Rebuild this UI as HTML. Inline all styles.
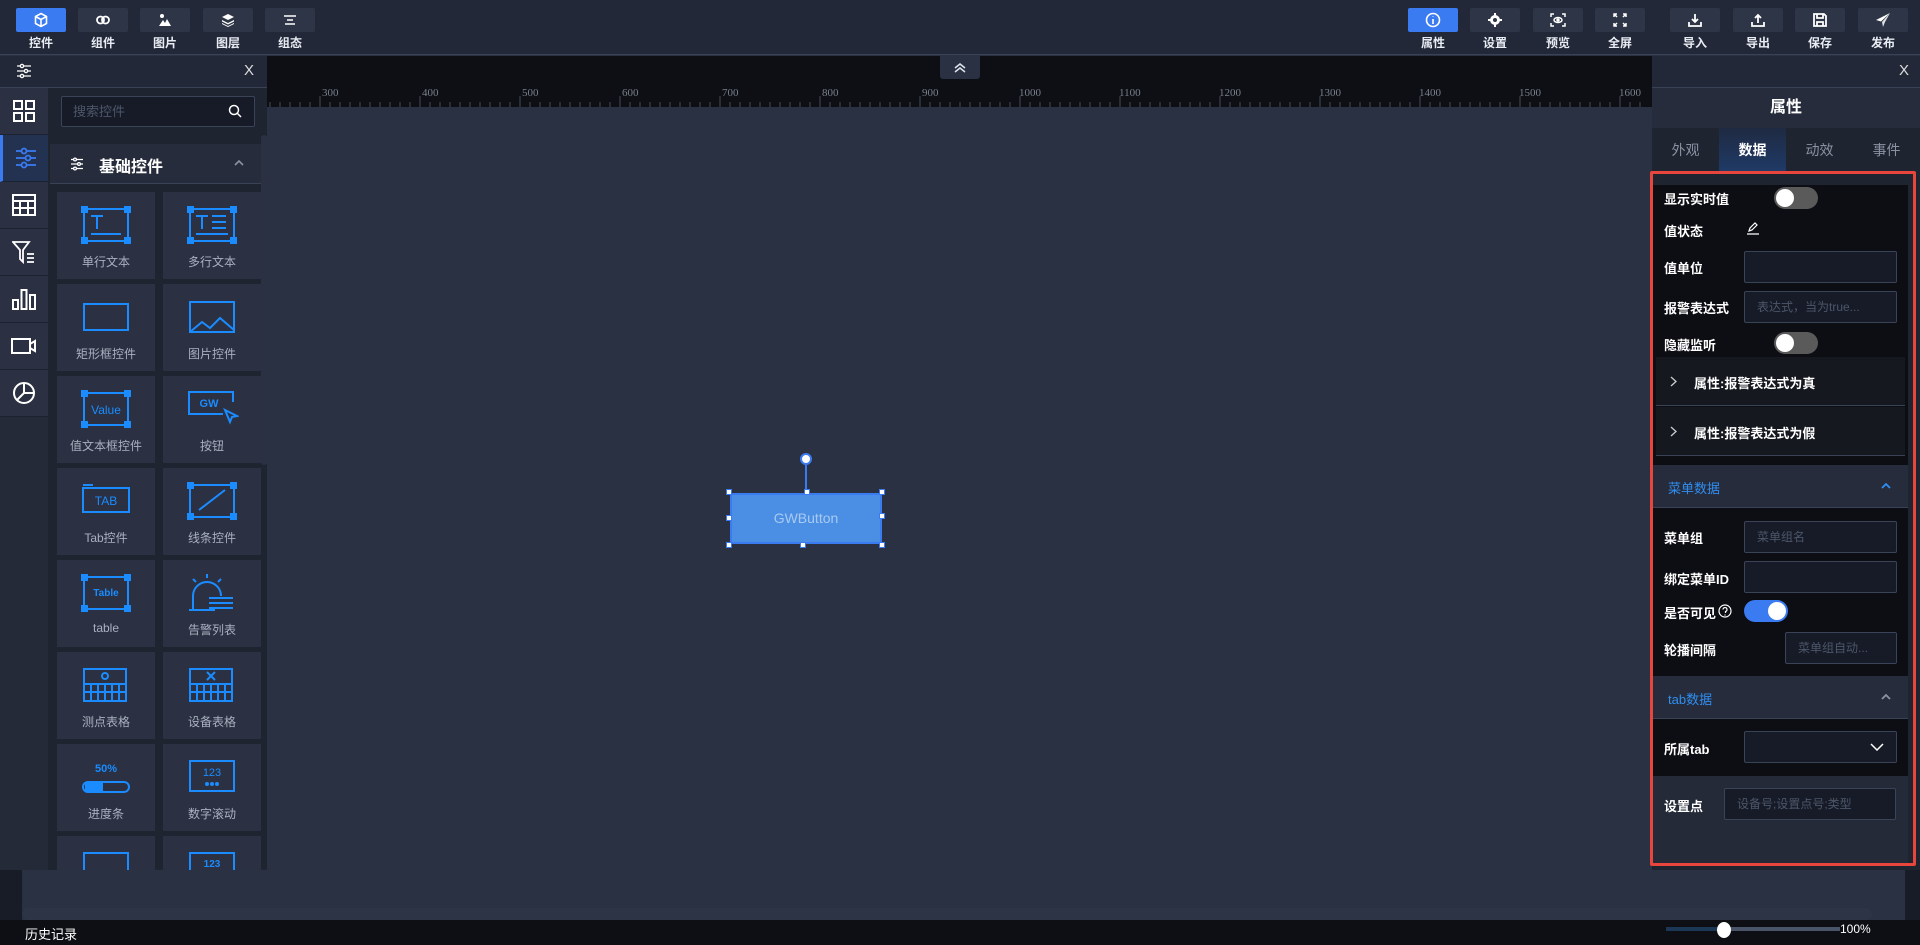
<!DOCTYPE html>
<html><head><meta charset="utf-8">
<style>
*{margin:0;padding:0;box-sizing:border-box}
body{width:1920px;height:945px;overflow:hidden;background:#2a3142;font-family:"Liberation Sans","Noto Sans CJK SC",sans-serif;color:#fff;position:relative}
.a{position:absolute}
.tb{position:absolute;top:8px;width:50px;height:24px;background:#2e3546;border-radius:2px;display:flex;align-items:center;justify-content:center}
.tbl{position:absolute;top:34px;width:50px;text-align:center;font-size:12px;font-weight:bold;color:#e8ecf3}
.card{position:absolute;width:98px;height:87px;background:#2b3142}
.card .lb{position:absolute;top:61px;width:100%;text-align:center;font-size:12px;color:#a9b1c0}
.card svg{position:absolute;left:24px;top:14px}
.lab{position:absolute;left:1664px;font-size:13px;font-weight:bold;color:#fff}
.inp{position:absolute;height:32px;border:1px solid #3a4458;background:#161b27;border-radius:2px;font-size:12px;color:#4d566a;padding-left:12px;line-height:30px}
.tg{position:absolute;width:44px;height:22px;border-radius:11px;background:#5a5a5a}
.tg i{position:absolute;left:2px;top:2px;width:18px;height:18px;border-radius:50%;background:#fff}
.side{position:absolute;left:0;width:48px;height:47px;border-bottom:1px solid #1c2130;display:flex;align-items:center;justify-content:center;background:#2b3142}
</style></head><body>
<div class="a" style="left:0;top:0;width:1920px;height:55px;background:#222838;border-bottom:1px solid #3a4256"></div>
<div class="tb" style="left:16px;background:#3a7bf2"><svg width="16" height="16" viewBox="0 0 16 16" fill="none" stroke="#fff" stroke-width="1.6"><path d="M8 1.5l5.5 3v7L8 14.5 2.5 11.5v-7z M2.5 4.5L8 7.5l5.5-3 M8 7.5v7"/></svg></div><div class="tbl" style="left:16px">控件</div>
<div class="tb" style="left:78px"><svg width="16" height="12" viewBox="0 0 16 12" fill="none" stroke="#fff" stroke-width="1.8"><circle cx="5.5" cy="6" r="3.5"/><circle cx="10.5" cy="6" r="3.5"/></svg></div><div class="tbl" style="left:78px">组件</div>
<div class="tb" style="left:140px"><svg width="14" height="14" viewBox="0 0 14 14" fill="#fff"><circle cx="4" cy="3" r="2"/><path d="M1 13l4-6 2 3 2-4 4 7z"/></svg></div><div class="tbl" style="left:140px">图片</div>
<div class="tb" style="left:203px"><svg width="14" height="14" viewBox="0 0 14 14" fill="#fff"><path d="M7 1l6 3-6 3-6-3z"/><path d="M1 7l6 3 6-3v1.5l-6 3-6-3z"/><path d="M1 10l6 3 6-3v1l-6 3-6-3z"/></svg></div><div class="tbl" style="left:203px">图层</div>
<div class="tb" style="left:265px"><svg width="12" height="10" viewBox="0 0 12 10" stroke="#fff" stroke-width="1.6"><path d="M0 1h12M3 5h6M1 9h10"/></svg></div><div class="tbl" style="left:265px">组态</div>

<div class="tb" style="left:1408px;background:#3a7bf2"><svg width="16" height="16" viewBox="0 0 16 16" fill="none" stroke="#fff" stroke-width="1.6"><circle cx="8" cy="8" r="6.5"/><path d="M8 7v5M8 4.5v.5"/></svg></div><div class="tbl" style="left:1408px">属性</div>
<div class="tb" style="left:1470px"><svg width="14" height="14" viewBox="0 0 14 14" fill="#fff"><circle cx="7" cy="7" r="5"/><circle cx="7" cy="7" r="2" fill="#2e3546"/><path d="M6 0h2v3H6zM6 11h2v3H6zM0 6h3v2H0zM11 6h3v2h-3z"/></svg></div><div class="tbl" style="left:1470px">设置</div>
<div class="tb" style="left:1533px"><svg width="16" height="14" viewBox="0 0 16 14" fill="none" stroke="#fff" stroke-width="1.5"><path d="M1 4V1h3M12 1h3v3M15 10v3h-3M4 13H1v-3"/><ellipse cx="8" cy="7" rx="4" ry="2.5"/><circle cx="8" cy="7" r="1" fill="#fff"/></svg></div><div class="tbl" style="left:1533px">预览</div>
<div class="tb" style="left:1595px"><svg width="14" height="14" viewBox="0 0 14 14" fill="none" stroke="#fff" stroke-width="1.5"><path d="M1 4V1h3M1 1l3 3M13 4V1h-3M13 1l-3 3M1 10v3h3M1 13l3-3M13 10v3h-3M13 13l-3-3"/></svg></div><div class="tbl" style="left:1595px">全屏</div>
<div class="tb" style="left:1670px"><svg width="14" height="14" viewBox="0 0 14 14" fill="none" stroke="#fff" stroke-width="1.8"><path d="M7 1v8M4 6l3 3 3-3M1 9v4h12V9"/></svg></div><div class="tbl" style="left:1670px">导入</div>
<div class="tb" style="left:1733px"><svg width="14" height="14" viewBox="0 0 14 14" fill="none" stroke="#fff" stroke-width="1.8"><path d="M7 10V2M4 5l3-3 3 3M1 9v4h12V9"/></svg></div><div class="tbl" style="left:1733px">导出</div>
<div class="tb" style="left:1795px"><svg width="14" height="14" viewBox="0 0 14 14" fill="none" stroke="#fff" stroke-width="1.8"><path d="M1 1h10l2 2v10H1z M4 1v4h6V1 M4 13V9h6v4"/></svg></div><div class="tbl" style="left:1795px">保存</div>
<div class="tb" style="left:1858px"><svg width="16" height="16" viewBox="0 0 16 16" fill="#fff"><path d="M15 1L1 8l5 1.5z"/><path d="M15 1L7 10l1 5 2-5z" opacity=".85"/></svg></div><div class="tbl" style="left:1858px">发布</div>

<div class="a" style="left:267px;top:56px;width:1385px;height:51px;background:#0d0f15"></div>
<svg class="a" style="left:267px;top:56px" width="1385" height="51">
<g fill="#7a808c" font-family="Liberation Serif" font-size="11">
<text x="55" y="40">300</text><text x="155" y="40">400</text><text x="255" y="40">500</text><text x="355" y="40">600</text><text x="455" y="40">700</text><text x="555" y="40">800</text><text x="655" y="40">900</text><text x="752" y="40">1000</text><text x="852" y="40">1100</text><text x="952" y="40">1200</text><text x="1052" y="40">1300</text><text x="1152" y="40">1400</text><text x="1252" y="40">1500</text><text x="1352" y="40">1600</text>
</g>
<path stroke="#444b58" d="M3 51v-5M13 51v-5M23 51v-5M33 51v-5M43 51v-5M53 51v-11M63 51v-5M73 51v-5M83 51v-5M93 51v-5M103 51v-5M113 51v-5M123 51v-5M133 51v-5M143 51v-5M153 51v-11M163 51v-5M173 51v-5M183 51v-5M193 51v-5M203 51v-5M213 51v-5M223 51v-5M233 51v-5M243 51v-5M253 51v-11M263 51v-5M273 51v-5M283 51v-5M293 51v-5M303 51v-5M313 51v-5M323 51v-5M333 51v-5M343 51v-5M353 51v-11M363 51v-5M373 51v-5M383 51v-5M393 51v-5M403 51v-5M413 51v-5M423 51v-5M433 51v-5M443 51v-5M453 51v-11M463 51v-5M473 51v-5M483 51v-5M493 51v-5M503 51v-5M513 51v-5M523 51v-5M533 51v-5M543 51v-5M553 51v-11M563 51v-5M573 51v-5M583 51v-5M593 51v-5M603 51v-5M613 51v-5M623 51v-5M633 51v-5M643 51v-5M653 51v-11M663 51v-5M673 51v-5M683 51v-5M693 51v-5M703 51v-5M713 51v-5M723 51v-5M733 51v-5M743 51v-5M753 51v-11M763 51v-5M773 51v-5M783 51v-5M793 51v-5M803 51v-5M813 51v-5M823 51v-5M833 51v-5M843 51v-5M853 51v-11M863 51v-5M873 51v-5M883 51v-5M893 51v-5M903 51v-5M913 51v-5M923 51v-5M933 51v-5M943 51v-5M953 51v-11M963 51v-5M973 51v-5M983 51v-5M993 51v-5M1003 51v-5M1013 51v-5M1023 51v-5M1033 51v-5M1043 51v-5M1053 51v-11M1063 51v-5M1073 51v-5M1083 51v-5M1093 51v-5M1103 51v-5M1113 51v-5M1123 51v-5M1133 51v-5M1143 51v-5M1153 51v-11M1163 51v-5M1173 51v-5M1183 51v-5M1193 51v-5M1203 51v-5M1213 51v-5M1223 51v-5M1233 51v-5M1243 51v-5M1253 51v-11M1263 51v-5M1273 51v-5M1283 51v-5M1293 51v-5M1303 51v-5M1313 51v-5M1323 51v-5M1333 51v-5M1343 51v-5M1353 51v-11M1363 51v-5M1373 51v-5"/>
</svg>
<div class="a" style="left:940px;top:56px;width:40px;height:23px;background:#2a3142;border-radius:0 0 3px 3px;display:flex;align-items:center;justify-content:center"><svg width="14" height="10" viewBox="0 0 14 10" fill="none" stroke="#dfe5ee" stroke-width="1.5"><path d="M2 5l5-4 5 4M2 9l5-4 5 4"/></svg></div>

<div class="a" style="left:0;top:870px;width:22px;height:50px;background:#181c26"></div>
<div class="a" style="left:1905px;top:870px;width:15px;height:50px;background:#181c26"></div>
<div class="a" style="left:22px;top:908px;width:1850px;height:12px;background:#2d3446;border-radius:6px"></div>
<div class="a" style="left:0;top:920px;width:1920px;height:25px;background:#0d0f14"></div>
<div class="a" style="left:25px;top:924px;font-size:13px;color:#fff">历史记录</div>
<div class="a" style="left:1666px;top:927px;width:58px;height:4px;background:#1c3656"></div>
<div class="a" style="left:1724px;top:927px;width:116px;height:4px;background:#4a5468"></div>
<div class="a" style="left:1717px;top:922px;width:14px;height:16px;border-radius:50%;background:#fff"></div>
<div class="a" style="left:1840px;top:922px;font-size:12px;color:#fff">100%</div>

<div class="a" style="left:805px;top:462px;width:2px;height:31px;background:#3a7bf2"></div>
<div class="a" style="left:800px;top:453px;width:12px;height:12px;border-radius:50%;background:#fff;border:2px solid #3a7bf2"></div>
<div class="a" style="left:730px;top:493px;width:152px;height:51px;background:#4a8fe4;border:2px solid #3a7bf2;border-radius:3px;text-align:center;line-height:47px;font-size:14px;color:#a9c9f2">GWButton</div>
<div class="a" style="left:726px;top:489px;width:6px;height:6px;background:#fff;border:1px solid #3a7bf2"></div>
<div class="a" style="left:804px;top:489px;width:6px;height:6px;background:#fff;border:1px solid #3a7bf2"></div>
<div class="a" style="left:879px;top:489px;width:6px;height:6px;background:#fff;border:1px solid #3a7bf2"></div>
<div class="a" style="left:726px;top:515px;width:6px;height:6px;background:#fff;border:1px solid #3a7bf2"></div>
<div class="a" style="left:879px;top:513px;width:6px;height:6px;background:#fff;border:1px solid #3a7bf2"></div>
<div class="a" style="left:726px;top:542px;width:6px;height:6px;background:#fff;border:1px solid #3a7bf2"></div>
<div class="a" style="left:800px;top:542px;width:6px;height:6px;background:#fff;border:1px solid #3a7bf2"></div>
<div class="a" style="left:879px;top:542px;width:6px;height:6px;background:#fff;border:1px solid #3a7bf2"></div>

<div class="a" style="left:0;top:56px;width:267px;height:814px;background:#1f2431"></div>
<div class="a" style="left:0;top:56px;width:267px;height:32px;background:#222838;border-bottom:1px solid #3a4256"></div>
<svg class="a" style="left:16px;top:63px" width="16" height="16" viewBox="0 0 16 16" fill="none" stroke="#fff" stroke-width="1.3"><path d="M1 3h14M1 8h14M1 13h14"/><circle cx="6" cy="3" r="1.6" fill="#222838"/><circle cx="10" cy="8" r="1.6" fill="#222838"/><circle cx="6" cy="13" r="1.6" fill="#222838"/></svg>
<div class="a" style="left:244px;top:62px;font-size:15px;color:#ddd">X</div>
<div class="a" style="left:0;top:88px;width:48px;height:782px;background:#242a38"></div>
<div class="side" style="top:88px"><svg width="24" height="24" viewBox="0 0 24 24" fill="none" stroke="#fff" stroke-width="2"><rect x="2" y="2" width="8" height="8"/><rect x="14" y="2" width="8" height="8"/><rect x="2" y="14" width="8" height="8"/><rect x="14" y="14" width="8" height="8"/></svg></div>
<div class="side" style="top:135px;background:#243252;border-left:3px solid #3a7bf2"><svg width="24" height="24" viewBox="0 0 24 24" fill="none" stroke="#3a7bf2" stroke-width="1.8"><path d="M2 5h20M2 12h20M2 19h20"/><circle cx="10" cy="5" r="2.5" fill="#243252"/><circle cx="14" cy="12" r="2.5" fill="#243252"/><circle cx="10" cy="19" r="2.5" fill="#243252"/></svg></div>
<div class="side" style="top:182px"><svg width="24" height="22" viewBox="0 0 24 22" fill="none" stroke="#fff" stroke-width="2"><rect x="1" y="1" width="22" height="20"/><path d="M1 7h22M1 14h22M8 7v14M16 7v14"/></svg></div>
<div class="side" style="top:229px"><svg width="24" height="24" viewBox="0 0 24 24" fill="none" stroke="#fff" stroke-width="1.8"><path d="M1 2h16l-6 8v12l-3-3v-9z M15 14h7M15 18h7M15 22h7"/></svg></div>
<div class="side" style="top:276px"><svg width="24" height="22" viewBox="0 0 24 22" fill="none" stroke="#fff" stroke-width="2"><rect x="1" y="12" width="5" height="9"/><rect x="9.5" y="2" width="5" height="19"/><rect x="18" y="7" width="5" height="14"/></svg></div>
<div class="side" style="top:323px"><svg width="26" height="18" viewBox="0 0 26 18" fill="none" stroke="#fff" stroke-width="2"><rect x="1" y="2" width="18" height="14"/><path d="M19 7l5-3v10l-5-3"/></svg></div>
<div class="side" style="top:370px"><svg width="24" height="24" viewBox="0 0 24 24" fill="none" stroke="#fff" stroke-width="2"><circle cx="12" cy="12" r="10"/><path d="M12 2v10h10M12 12l-7 7"/></svg></div>

<div class="a" style="left:61px;top:96px;width:194px;height:31px;border:1px solid #3a4458;background:#161b27;border-radius:2px;font-size:13px;color:#4d566a;padding-left:11px;line-height:29px">搜索控件</div>
<svg class="a" style="left:228px;top:104px" width="14" height="14" viewBox="0 0 14 14" fill="none" stroke="#fff" stroke-width="1.5"><circle cx="6" cy="6" r="4.5"/><path d="M9.5 9.5l3.5 3.5"/></svg>
<div class="a" style="left:50px;top:144px;width:211px;height:40px;background:#262c3b;border-bottom:1px solid #3a4256"></div>
<svg class="a" style="left:70px;top:157px" width="14" height="14" viewBox="0 0 14 14" fill="none" stroke="#fff" stroke-width="1.3"><path d="M1 2.5h12M1 7h12M1 11.5h12"/><circle cx="5" cy="2.5" r="1.4" fill="#262c3b"/><circle cx="9" cy="7" r="1.4" fill="#262c3b"/><circle cx="5" cy="11.5" r="1.4" fill="#262c3b"/></svg>
<div class="a" style="left:99px;top:153px;font-size:16px;font-weight:bold;color:#fff">基础控件</div>
<svg class="a" style="left:234px;top:160px" width="10" height="6" viewBox="0 0 10 6" fill="none" stroke="#8a92a2" stroke-width="1.6"><path d="M1 5l4-4 4 4"/></svg>
<div class="a" style="left:261px;top:135px;width:6px;height:330px;background:#2b3142;border-radius:3px"></div>

<div class="card" style="left:57px;top:192px"><svg width="50" height="38" viewBox="0 0 50 38" fill="none" stroke="#1a8cff" stroke-width="2"><rect x="3" y="3" width="44" height="32"/><rect x="0" y="0" width="6" height="6" fill="#1a8cff"/><rect x="44" y="0" width="6" height="6" fill="#1a8cff"/><rect x="0" y="32" width="6" height="6" fill="#1a8cff"/><rect x="44" y="32" width="6" height="6" fill="#1a8cff"/><path d="M10 10h12M16 10v13M10 28h30"/></svg><div class="lb">单行文本</div></div>
<div class="card" style="left:163px;top:192px"><svg width="50" height="38" viewBox="0 0 50 38" fill="none" stroke="#1a8cff" stroke-width="2"><rect x="3" y="3" width="44" height="32"/><rect x="0" y="0" width="6" height="6" fill="#1a8cff"/><rect x="44" y="0" width="6" height="6" fill="#1a8cff"/><rect x="0" y="32" width="6" height="6" fill="#1a8cff"/><rect x="44" y="32" width="6" height="6" fill="#1a8cff"/><path d="M9 10h12M15 10v13M25 10h14M25 16h14M25 22h14M9 28h32"/></svg><div class="lb">多行文本</div></div>
<div class="card" style="left:57px;top:284px"><svg width="50" height="38" viewBox="0 0 50 38" fill="none" stroke="#1a8cff" stroke-width="2"><rect x="3" y="6" width="44" height="26"/></svg><div class="lb">矩形框控件</div></div>
<div class="card" style="left:163px;top:284px"><svg width="50" height="38" viewBox="0 0 50 38" fill="none" stroke="#1a8cff" stroke-width="2"><rect x="3" y="4" width="44" height="30"/><path d="M3 34l12-10 8 6 10-10 14 12"/></svg><div class="lb">图片控件</div></div>
<div class="card" style="left:57px;top:376px"><svg width="50" height="38" viewBox="0 0 50 38" fill="none" stroke="#1a8cff" stroke-width="2"><rect x="3" y="3" width="44" height="32"/><rect x="0" y="0" width="6" height="6" fill="#1a8cff"/><rect x="44" y="0" width="6" height="6" fill="#1a8cff"/><rect x="0" y="32" width="6" height="6" fill="#1a8cff"/><rect x="44" y="32" width="6" height="6" fill="#1a8cff"/><text x="25" y="24" text-anchor="middle" fill="#1a8cff" stroke="none" font-size="12" font-family="Liberation Sans">Value</text></svg><div class="lb">值文本框控件</div></div>
<div class="card" style="left:163px;top:376px"><svg width="52" height="38" viewBox="0 0 52 38" fill="none" stroke="#1a8cff" stroke-width="2"><path d="M36 24H2V2h44v10"/><path d="M38 20l12 6-5 1-2 5z"/><text x="22" y="17" text-anchor="middle" fill="#1a8cff" stroke="none" font-size="11" font-weight="bold" font-family="Liberation Sans">GW</text></svg><div class="lb">按钮</div></div>
<div class="card" style="left:57px;top:468px"><svg width="50" height="38" viewBox="0 0 50 38" fill="none" stroke="#1a8cff" stroke-width="2"><rect x="2" y="6" width="46" height="24"/><path d="M2 3h10"/><text x="25" y="23" text-anchor="middle" fill="#1a8cff" stroke="none" font-size="12" font-family="Liberation Sans">TAB</text></svg><div class="lb">Tab控件</div></div>
<div class="card" style="left:163px;top:468px"><svg width="50" height="38" viewBox="0 0 50 38" fill="none" stroke="#1a8cff" stroke-width="2"><rect x="3" y="3" width="44" height="32"/><rect x="0" y="0" width="6" height="6" fill="#1a8cff"/><rect x="44" y="0" width="6" height="6" fill="#1a8cff"/><rect x="0" y="32" width="6" height="6" fill="#1a8cff"/><rect x="44" y="32" width="6" height="6" fill="#1a8cff"/><path d="M12 28L38 8"/></svg><div class="lb">线条控件</div></div>
<div class="card" style="left:57px;top:560px"><svg width="50" height="38" viewBox="0 0 50 38" fill="none" stroke="#1a8cff" stroke-width="2"><rect x="3" y="3" width="44" height="32"/><rect x="0" y="0" width="6" height="6" fill="#1a8cff"/><rect x="44" y="0" width="6" height="6" fill="#1a8cff"/><rect x="0" y="32" width="6" height="6" fill="#1a8cff"/><rect x="44" y="32" width="6" height="6" fill="#1a8cff"/><text x="25" y="22" text-anchor="middle" fill="#1a8cff" stroke="none" font-size="10" font-weight="bold" font-family="Liberation Sans">Table</text></svg><div class="lb">table</div></div>
<div class="card" style="left:163px;top:560px"><svg width="50" height="38" viewBox="0 0 50 38" fill="none" stroke="#1a8cff" stroke-width="2"><path d="M6 36V22a14 14 0 0 1 28 0M2 36h26M22 24h24M22 29h24M22 34h24M20 0v4M6 5l3 3M34 5l-3 3"/></svg><div class="lb">告警列表</div></div>
<div class="card" style="left:57px;top:652px"><svg width="50" height="38" viewBox="0 0 50 38" fill="none" stroke="#1a8cff" stroke-width="2"><rect x="3" y="3" width="42" height="32"/><path d="M3 18h42M3 26h42M10 18v17M17 18v17M24 18v17M31 18v17M38 18v17"/><circle cx="24" cy="10" r="3"/></svg><div class="lb">测点表格</div></div>
<div class="card" style="left:163px;top:652px"><svg width="50" height="38" viewBox="0 0 50 38" fill="none" stroke="#1a8cff" stroke-width="2"><rect x="3" y="3" width="42" height="32"/><path d="M3 18h42M3 26h42M10 18v17M17 18v17M24 18v17M31 18v17M38 18v17M20 6l8 8M28 6l-8 8"/></svg><div class="lb">设备表格</div></div>
<div class="card" style="left:57px;top:744px"><svg width="50" height="38" viewBox="0 0 50 38" fill="none" stroke="#1a8cff" stroke-width="2"><rect x="2" y="24" width="46" height="10" rx="5"/><path d="M5 25h16v8H5z" fill="#1a8cff"/><text x="25" y="14" text-anchor="middle" fill="#1a8cff" stroke="none" font-size="11" font-weight="bold" font-family="Liberation Sans">50%</text></svg><div class="lb">进度条</div></div>
<div class="card" style="left:163px;top:744px"><svg width="50" height="38" viewBox="0 0 50 38" fill="none" stroke="#1a8cff" stroke-width="2"><rect x="3" y="3" width="44" height="30"/><text x="25" y="18" text-anchor="middle" fill="#1a8cff" stroke="none" font-size="11" font-family="Liberation Sans">123</text><circle cx="20" cy="26" r="1" fill="#1a8cff"/><circle cx="25" cy="26" r="1" fill="#1a8cff"/><circle cx="30" cy="26" r="1" fill="#1a8cff"/></svg><div class="lb">数字滚动</div></div>
<div class="card" style="left:57px;top:836px;height:34px"><svg width="50" height="20" viewBox="0 0 50 20" fill="none" stroke="#1a8cff" stroke-width="2"><path d="M3 20V3h44v17"/></svg></div>
<div class="card" style="left:163px;top:836px;height:34px"><svg width="50" height="20" viewBox="0 0 50 20" fill="none" stroke="#1a8cff" stroke-width="2"><path d="M3 20V3h44v17"/><text x="25" y="17" text-anchor="middle" fill="#1a8cff" stroke="none" font-size="10" font-weight="bold" font-family="Liberation Sans">123</text></svg></div>

<div class="a" style="left:1652px;top:56px;width:268px;height:814px;background:#1f2431"></div>
<div class="a" style="left:1652px;top:56px;width:268px;height:32px;background:#222838;border-bottom:1px solid #3a4256"></div>
<div class="a" style="left:1899px;top:62px;font-size:15px;color:#ddd">X</div>
<div class="a" style="left:1652px;top:88px;width:268px;height:40px;background:#262c3b;text-align:center;line-height:40px;font-size:16px;font-weight:bold">属性</div>
<div class="a" style="left:1652px;top:128px;width:268px;height:43px;background:#1f2431"></div>
<div class="a" style="left:1719px;top:128px;width:67px;height:43px;background:linear-gradient(#1f2a42,#1f3a66)"></div>
<div class="a" style="left:1652px;top:140px;width:67px;text-align:center;font-size:14px;color:#8a92a2">外观</div>
<div class="a" style="left:1719px;top:140px;width:67px;text-align:center;font-size:14px;font-weight:bold;color:#fff">数据</div>
<div class="a" style="left:1786px;top:140px;width:67px;text-align:center;font-size:14px;color:#8a92a2">动效</div>
<div class="a" style="left:1853px;top:140px;width:67px;text-align:center;font-size:14px;color:#8a92a2">事件</div>

<div class="a" style="left:1652px;top:185px;width:256px;height:280px;background:#0c0e13"></div>
<div class="lab" style="top:189px">显示实时值</div><div class="tg" style="left:1774px;top:187px"><i></i></div>
<div class="lab" style="top:221px">值状态</div>
<svg class="a" style="left:1746px;top:221px" width="14" height="14" viewBox="0 0 14 14" fill="none" stroke="#fff" stroke-width="1.2"><path d="M3 10l1-3 5-5 2 2-5 5z M1 13h12"/></svg>
<div class="lab" style="top:258px">值单位</div><div class="inp" style="left:1744px;top:251px;width:153px"></div>
<div class="lab" style="top:298px">报警表达式</div><div class="inp" style="left:1744px;top:291px;width:153px">表达式，当为true...</div>
<div class="lab" style="top:335px">隐藏监听</div><div class="tg" style="left:1774px;top:332px"><i></i></div>
<div class="a" style="left:1656px;top:357px;width:249px;height:49px;background:#15181f;border-bottom:1px solid #3a4256"></div>
<div class="a" style="left:1656px;top:407px;width:249px;height:49px;background:#15181f;border-bottom:1px solid #3a4256"></div>
<svg class="a" style="left:1670px;top:376px" width="8" height="11" viewBox="0 0 8 11" fill="none" stroke="#ccc" stroke-width="1.3"><path d="M1 1l5 4.5L1 10"/></svg>
<div class="a" style="left:1694px;top:373px;font-size:13px;font-weight:bold">属性:报警表达式为真</div>
<svg class="a" style="left:1670px;top:426px" width="8" height="11" viewBox="0 0 8 11" fill="none" stroke="#ccc" stroke-width="1.3"><path d="M1 1l5 4.5L1 10"/></svg>
<div class="a" style="left:1694px;top:423px;font-size:13px;font-weight:bold">属性:报警表达式为假</div>

<div class="a" style="left:1652px;top:465px;width:256px;height:43px;background:#262c3b;border-bottom:1px solid #3a4256"></div>
<div class="a" style="left:1668px;top:478px;font-size:13px;color:#2f8ef2">菜单数据</div>
<svg class="a" style="left:1881px;top:483px" width="10" height="6" viewBox="0 0 10 6" fill="none" stroke="#2f8ef2" stroke-width="1.8"><path d="M1 5l4-4 4 4"/></svg>
<div class="a" style="left:1652px;top:508px;width:256px;height:168px;background:#0c0e13"></div>
<div class="lab" style="top:528px">菜单组</div><div class="inp" style="left:1744px;top:521px;width:153px">菜单组名</div>
<div class="lab" style="top:569px">绑定菜单ID</div><div class="inp" style="left:1744px;top:561px;width:153px"></div>
<div class="lab" style="top:603px">是否可见</div>
<svg class="a" style="left:1718px;top:604px" width="14" height="14" viewBox="0 0 14 14" fill="none" stroke="#fff" stroke-width="1.2"><circle cx="7" cy="7" r="6"/><path d="M5 5.5a2 2 0 1 1 2.5 2V9M7 10.5v1"/></svg>
<div class="tg" style="left:1744px;top:600px;background:#3a7bf2"><i style="left:24px"></i></div>
<div class="lab" style="top:640px">轮播间隔</div><div class="inp" style="left:1785px;top:632px;width:112px">菜单组自动...</div>

<div class="a" style="left:1652px;top:676px;width:256px;height:43px;background:#262c3b;border-bottom:1px solid #3a4256"></div>
<div class="a" style="left:1668px;top:689px;font-size:13px;color:#2f8ef2">tab数据</div>
<svg class="a" style="left:1881px;top:694px" width="10" height="6" viewBox="0 0 10 6" fill="none" stroke="#8a92a2" stroke-width="1.8"><path d="M1 5l4-4 4 4"/></svg>
<div class="a" style="left:1652px;top:719px;width:256px;height:57px;background:#0c0e13"></div>
<div class="lab" style="top:739px">所属tab</div><div class="inp" style="left:1744px;top:731px;width:153px"></div>
<svg class="a" style="left:1870px;top:743px" width="14" height="8" viewBox="0 0 14 8" fill="none" stroke="#fff" stroke-width="1.5"><path d="M1 1l6 6 6-6"/></svg>
<div class="a" style="left:1652px;top:776px;width:256px;height:90px;background:#242a38"></div>
<div class="lab" style="top:796px">设置点</div><div class="inp" style="left:1724px;top:788px;width:172px">设备号;设置点号;类型</div>

<div class="a" style="left:1650px;top:171px;width:266px;height:695px;border:3px solid #e8453c;border-radius:2px"></div>
</body></html>
